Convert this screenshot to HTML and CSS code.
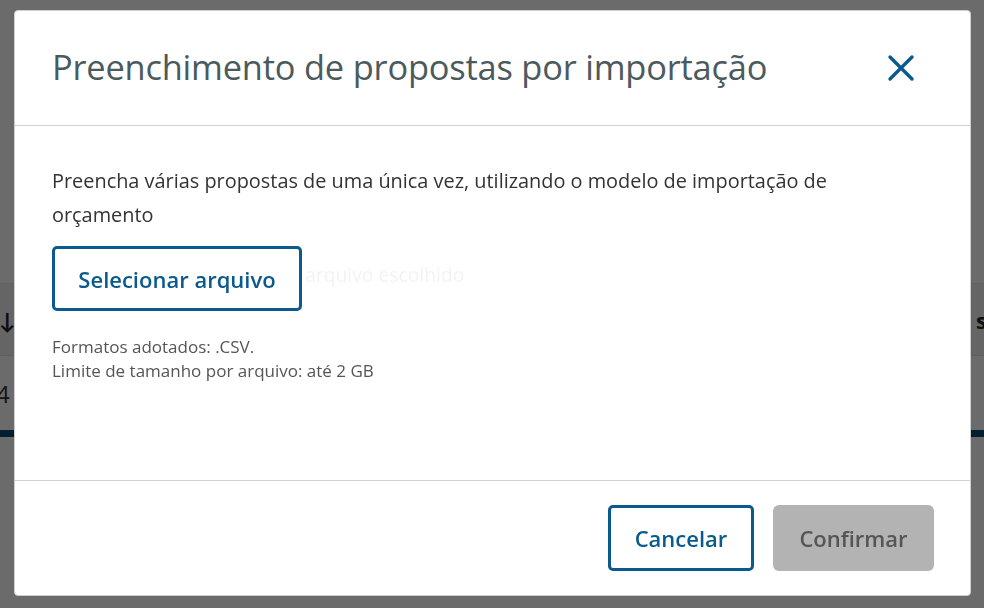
FILE: index.html
```html
<!DOCTYPE html>
<html lang="pt-BR">
<head>
<meta charset="utf-8">
<title>Importação</title>
<link rel="stylesheet" href="styles.css">
</head>
<body>
<div class="page">
  <div class="table">
    <div class="thead"><span class="th-left">↓</span><span class="th-right">s</span></div>
    <div class="trow"><span class="td-left">4</span></div>
  </div>
</div>
<div class="overlay"></div>
<div class="modal" role="dialog">
  <div class="modal-header">
    <h1 class="modal-title">Preenchimento de propostas por importação</h1>
    <button class="close" aria-label="Fechar">
      <svg width="28" height="28" viewBox="0 0 28 28"><path d="M3 3 L25 25 M25 3 L3 25" stroke="#0b5a8e" stroke-width="3.4" stroke-linecap="round" fill="none"/></svg>
    </button>
  </div>
  <div class="modal-body">
    <p class="intro">Preencha várias propostas de uma única vez, utilizando o modelo de importação de orçamento</p>
    <div class="file-row">
      <span class="native-file">Escolher arquivo&nbsp;&nbsp;Nenhum arquivo escolhido</span>
      <button class="btn btn-outline btn-select">Selecionar arquivo</button>
    </div>
    <p class="hint">Formatos adotados: .CSV.<br>Limite de tamanho por arquivo: até 2 GB</p>
  </div>
  <div class="modal-footer">
    <button class="btn btn-outline btn-cancel">Cancelar</button>
    <button class="btn btn-disabled">Confirmar</button>
  </div>
</div>
</body>
</html>
```

FILE: styles.css
```css
* { box-sizing: border-box; }
html, body { margin: 0; padding: 0; }
body {
  width: 984px;
  height: 608px;
  overflow: hidden;
  background: #ffffff;
  font-family: "Open Sans", Lato, sans-serif;
}
.page {
  height: 608px;
  padding-top: 283px;
}
.table {
  border-bottom: 7px solid #0b4a72;
}
.thead {
  height: 72px;
  background: #f1f1f1;
  border-top: 1px solid #e6e6e6;
  display: flex;
  align-items: center;
  justify-content: space-between;
  font-size: 22px;
  font-weight: 700;
  color: #222;
}
.th-left { margin-left: -1px; }
.th-right { margin-right: -3px; }
.trow {
  height: 75px;
  background: #ffffff;
  border-top: 1px solid #e0e0e0;
  display: flex;
  align-items: center;
  font-size: 24px;
  color: #333;
}
.td-left { margin-left: -4px; }
.overlay {
  position: fixed;
  inset: 0;
  background: rgba(0, 0, 0, 0.58);
}
.modal {
  position: fixed;
  left: 14px;
  top: 10px;
  width: 957px;
  height: 586px;
  background: #fff;
  border: 1px solid #cfcfcf;
  border-radius: 4px;
  display: flex;
  flex-direction: column;
}
.modal-header {
  height: 115px;
  flex: none;
  border-bottom: 1px solid #d2d2d2;
  display: flex;
  align-items: center;
  justify-content: space-between;
  padding: 0 55px 0 37px;
}
.modal-title {
  margin: 0 0 4px;
  font-size: 34.4px;
  font-weight: 400;
  color: #4b5a5d;
  letter-spacing: -0.2px;
}
.close {
  border: 0;
  background: none;
  padding: 0;
  width: 28px;
  height: 28px;
  display: flex;
}
.modal-body {
  flex: 1;
  padding: 38px 37px 0;
}
.intro {
  margin: 0;
  font-size: 19.9px;
  line-height: 34px;
  color: #333;
}
.file-row {
  position: relative;
  margin-top: 14px;
  height: 65px;
  display: flex;
}
.native-file {
  position: absolute;
  left: 10px;
  top: 15px;
  font-size: 19.3px;
  color: #f3f3f3;
  white-space: nowrap;
}
.btn {
  font-family: inherit;
  font-size: 22px;
  font-weight: 600;
  border-radius: 5px;
  cursor: pointer;
}
.btn-outline {
  background: #fff;
  color: #0b5a8e;
  border: 3px solid #0b5a8e;
}
.btn-select {
  position: relative;
  width: 250px;
  height: 65px;
}
.hint {
  margin: 24px 0 0;
  font-size: 17px;
  line-height: 24px;
  color: #555;
}
.modal-footer {
  height: 115px;
  flex: none;
  border-top: 1px solid #d2d2d2;
  display: flex;
  justify-content: flex-end;
  align-items: flex-start;
  gap: 19px;
  padding: 24px 36px 0 0;
}
.btn-cancel {
  width: 146px;
  height: 66px;
}
.btn-disabled {
  width: 161px;
  height: 66px;
  background: #b3b3b3;
  color: #555;
  border: 0;
  border-radius: 6px;
}
```
